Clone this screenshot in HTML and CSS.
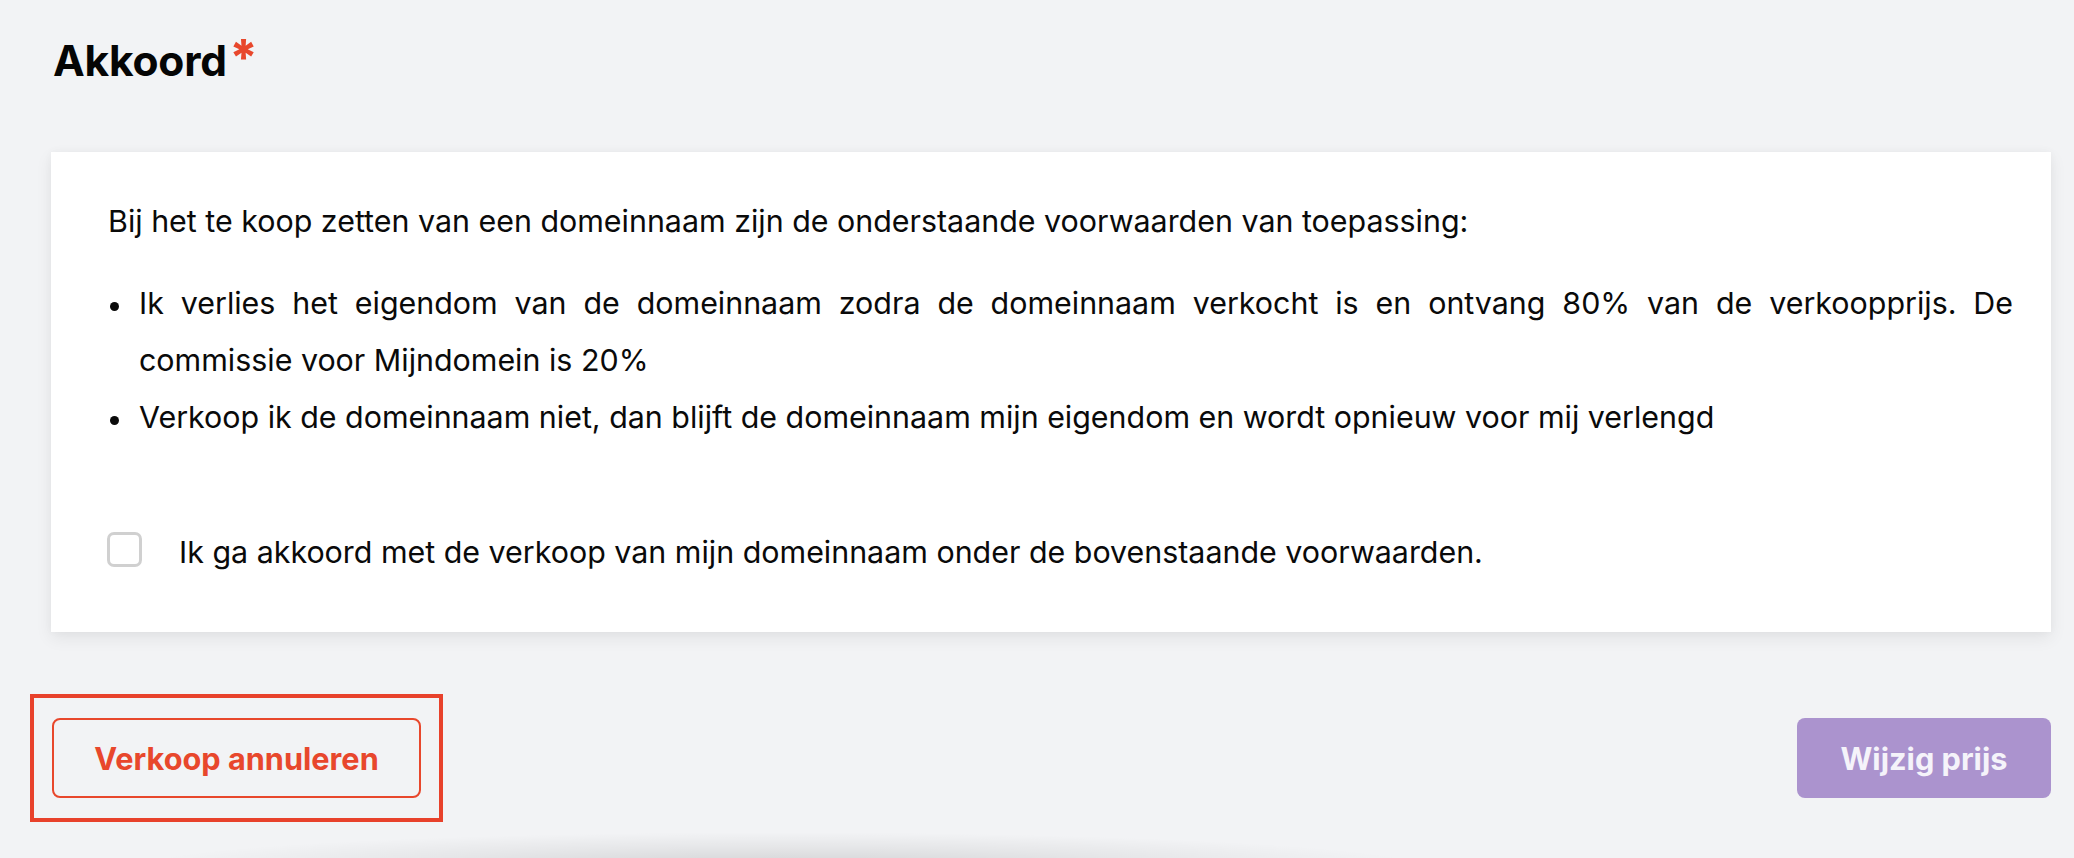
FILE: index.html
```html
<!DOCTYPE html>
<html lang="nl">
<head>
<meta charset="utf-8">
<title>Akkoord</title>
<link rel="stylesheet" href="styles.css">
</head>
<body>
<main class="page">
  <h2 class="title">Akkoord<span class="req">*</span></h2>

  <section class="card">
    <p class="intro">Bij het te koop zetten van een domeinnaam zijn de onderstaande voorwaarden van toepassing:</p>
    <ul class="terms">
      <li>Ik verlies het eigendom van de domeinnaam zodra de domeinnaam verkocht is en ontvang 80% van de verkoopprijs. De commissie voor Mijndomein is 20%</li>
      <li>Verkoop ik de domeinnaam niet, dan blijft de domeinnaam mijn eigendom en wordt opnieuw voor mij verlengd</li>
    </ul>
    <label class="agree">
      <span class="checkbox"></span>
      <span class="agree-text">Ik ga akkoord met de verkoop van mijn domeinnaam onder de bovenstaande voorwaarden.</span>
    </label>
  </section>

  <div class="actions">
    <div class="highlight">
      <button class="btn btn-outline" type="button">Verkoop annuleren</button>
    </div>
    <button class="btn btn-primary" type="button">Wijzig prijs</button>
  </div>

  <div class="fade"></div>
</main>
</body>
</html>
```

FILE: styles.css
```css
html, body {
  margin: 0;
  padding: 0;
  overflow: hidden;
}

body {
  background: #f2f3f5;
  font-family: "Inter", "Liberation Sans", sans-serif;
  color: #0a0a0a;
}

.page {
  padding: 36px 23px 0 51px;
}

.title {
  margin: 0 0 66px 2px;
  font-size: 42.5px;
  line-height: 50px;
  font-weight: 700;
  color: #050505;
  letter-spacing: -0.2px;
}

.req {
  color: #e8472c;
  font-size: 50px;
  font-weight: 800;
  line-height: 0;
  vertical-align: 1px;
  margin-left: 2px;
}

.card {
  background: #ffffff;
  padding: 41px 38px 51px 57px;
  box-shadow: 0 6px 16px rgba(0, 0, 0, 0.07), 0 0 8px rgba(0, 0, 0, 0.03);
  font-size: 30.4px;
  line-height: 57px;
}

.intro {
  margin: 0 0 25px 0;
}

.terms {
  list-style: none;
  margin: 0;
  padding: 0;
}

.terms li {
  display: flex;
  text-align: justify;
}

.terms li::before {
  content: "";
  flex: 0 0 9px;
  width: 9px;
  height: 9px;
  margin: 27px 20px 0 2px;
  border-radius: 50%;
  background: #0a0a0a;
}

.agree {
  display: flex;
  align-items: flex-start;
  gap: 37px;
  margin-top: 78px;
}

.checkbox {
  flex: 0 0 35px;
  width: 35px;
  height: 35px;
  box-sizing: border-box;
  margin: 8px 0 0 -1px;
  border: 3px solid #d0d0d0;
  border-radius: 7px;
  background: #ffffff;
}

.actions {
  display: flex;
  justify-content: space-between;
  align-items: center;
  margin-top: 62px;
}

.highlight {
  margin-left: -21px;
  padding: 20px 18px;
  border: 4px solid #e8412b;
}

.btn {
  display: flex;
  align-items: center;
  justify-content: center;
  height: 80px;
  box-sizing: border-box;
  border-radius: 8px;
  font-family: "Inter", "Liberation Sans", sans-serif;
  font-size: 30.7px;
  font-weight: 700;
  cursor: pointer;
}

.btn-outline {
  width: 369px;
  background: transparent;
  color: #e8472c;
  border: 2px solid #e8472c;
}

.btn-primary {
  width: 254px;
  background: #ab93ce;
  color: #f5f3fa;
  border: none;
}

.fade {
  margin: 10px 0 0 80px;
  width: 1300px;
  height: 36px;
  background: radial-gradient(ellipse 50% 100% at 50% 100%, rgba(0, 0, 0, 0.14), rgba(0, 0, 0, 0.05) 60%, rgba(0, 0, 0, 0) 100%);
}
```
